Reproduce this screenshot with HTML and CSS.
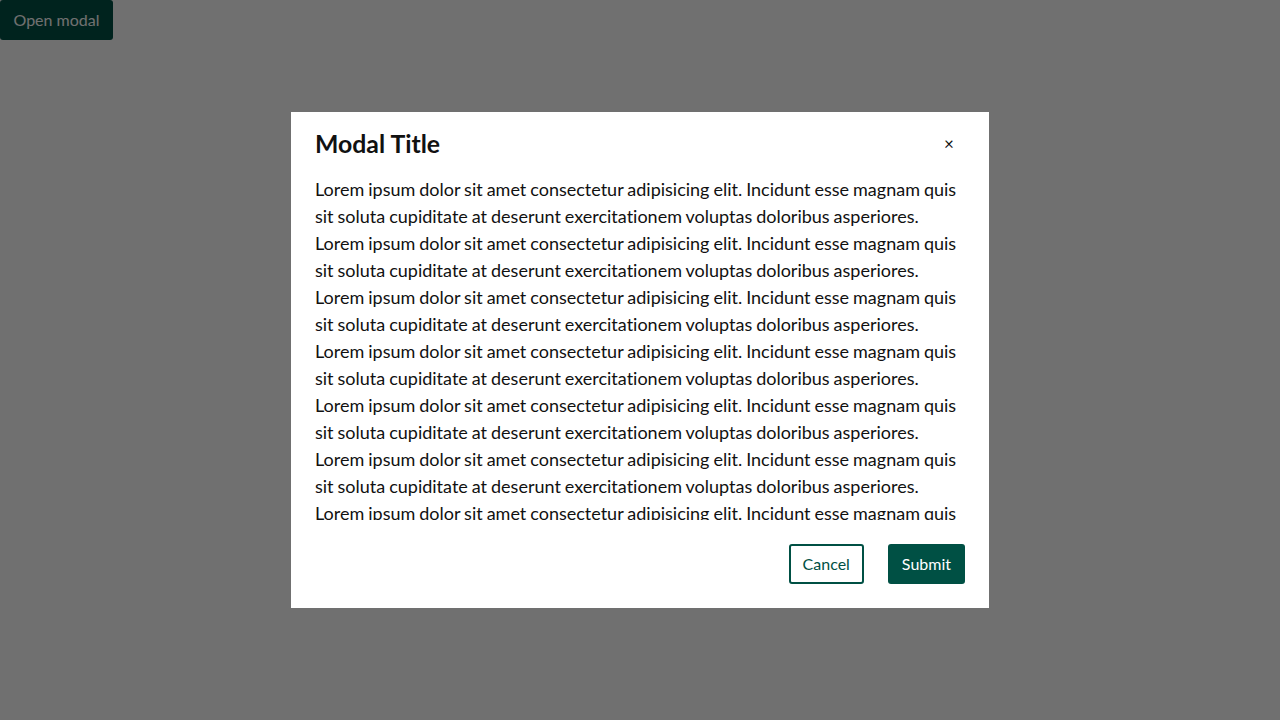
FILE: index.html
```html
<!DOCTYPE html>
<html lang="en">
<head>
<meta charset="utf-8">
<title>Modal</title>
<link rel="stylesheet" href="styles.css">
</head>
<body>
<button class="btn btn-primary open-btn">Open modal</button>
<div class="overlay">
  <div class="modal" role="dialog" aria-labelledby="modal-title">
    <div class="modal-header">
      <h2 class="modal-title" id="modal-title">Modal Title</h2>
      <button class="close-btn" aria-label="Close">×</button>
    </div>
    <div class="modal-body">
      <p>Lorem ipsum dolor sit amet consectetur adipisicing elit. Incidunt esse magnam quis sit soluta cupiditate at deserunt exercitationem voluptas doloribus asperiores. Lorem ipsum dolor sit amet consectetur adipisicing elit. Incidunt esse magnam quis sit soluta cupiditate at deserunt exercitationem voluptas doloribus asperiores. Lorem ipsum dolor sit amet consectetur adipisicing elit. Incidunt esse magnam quis sit soluta cupiditate at deserunt exercitationem voluptas doloribus asperiores. Lorem ipsum dolor sit amet consectetur adipisicing elit. Incidunt esse magnam quis sit soluta cupiditate at deserunt exercitationem voluptas doloribus asperiores. Lorem ipsum dolor sit amet consectetur adipisicing elit. Incidunt esse magnam quis sit soluta cupiditate at deserunt exercitationem voluptas doloribus asperiores. Lorem ipsum dolor sit amet consectetur adipisicing elit. Incidunt esse magnam quis sit soluta cupiditate at deserunt exercitationem voluptas doloribus asperiores. Lorem ipsum dolor sit amet consectetur adipisicing elit. Incidunt esse magnam quis sit soluta cupiditate at deserunt exercitationem voluptas doloribus asperiores. Lorem ipsum dolor sit amet consectetur adipisicing elit. Incidunt esse magnam quis sit soluta cupiditate at deserunt exercitationem voluptas doloribus asperiores.</p>
    </div>
    <div class="modal-footer">
      <button class="btn btn-outline">Cancel</button>
      <button class="btn btn-primary">Submit</button>
    </div>
  </div>
</div>
</body>
</html>
```

FILE: styles.css
```css
* { box-sizing: border-box; }

html, body {
  margin: 0;
  padding: 0;
  height: 100%;
}

body {
  font-family: Lato, "Liberation Sans", sans-serif;
  font-variant-ligatures: none;
  background: #ffffff;
  color: #111111;
}

.btn {
  font-family: Lato, "Liberation Sans", sans-serif;
  font-variant-ligatures: none;
  font-size: 16px;
  height: 40px;
  padding: 0 14px;
  border-radius: 3px;
  cursor: pointer;
  line-height: 1;
}

.btn-primary {
  background: #005044;
  color: #ffffff;
  border: none;
}

.btn-outline {
  background: #ffffff;
  color: #005044;
  border: 2px solid #005044;
  padding: 0 12px;
}

.open-btn {
  display: block;
  padding: 0 13.5px;
}

.overlay {
  position: fixed;
  inset: 0;
  background: rgba(0, 0, 0, 0.56);
  display: flex;
  align-items: center;
  justify-content: center;
}

.modal {
  width: 698px;
  height: 496px;
  background: #ffffff;
  padding: 0 24px 24px;
  display: flex;
  flex-direction: column;
}

.modal-header {
  height: 64px;
  padding-bottom: 2px;
  display: flex;
  align-items: center;
  justify-content: space-between;
  flex: none;
}

.modal-title {
  margin: 0;
  font-size: 24.8px;
  font-weight: 700;
  line-height: normal;
  color: #111111;
}

.close-btn {
  background: none;
  border: none;
  font-family: Lato, "Liberation Sans", sans-serif;
  font-size: 17px;
  color: #111111;
  width: 32px;
  height: 32px;
  padding: 0;
  cursor: pointer;
}

.modal-body {
  height: 344px;
  flex: none;
  overflow: hidden;
}

.modal-body p {
  margin: 0;
  font-size: 18px;
  line-height: 27px;
  word-spacing: -0.65px;
  color: #111111;
}

.modal-footer {
  margin-top: auto;
  display: flex;
  justify-content: flex-end;
  gap: 24px;
}
```
